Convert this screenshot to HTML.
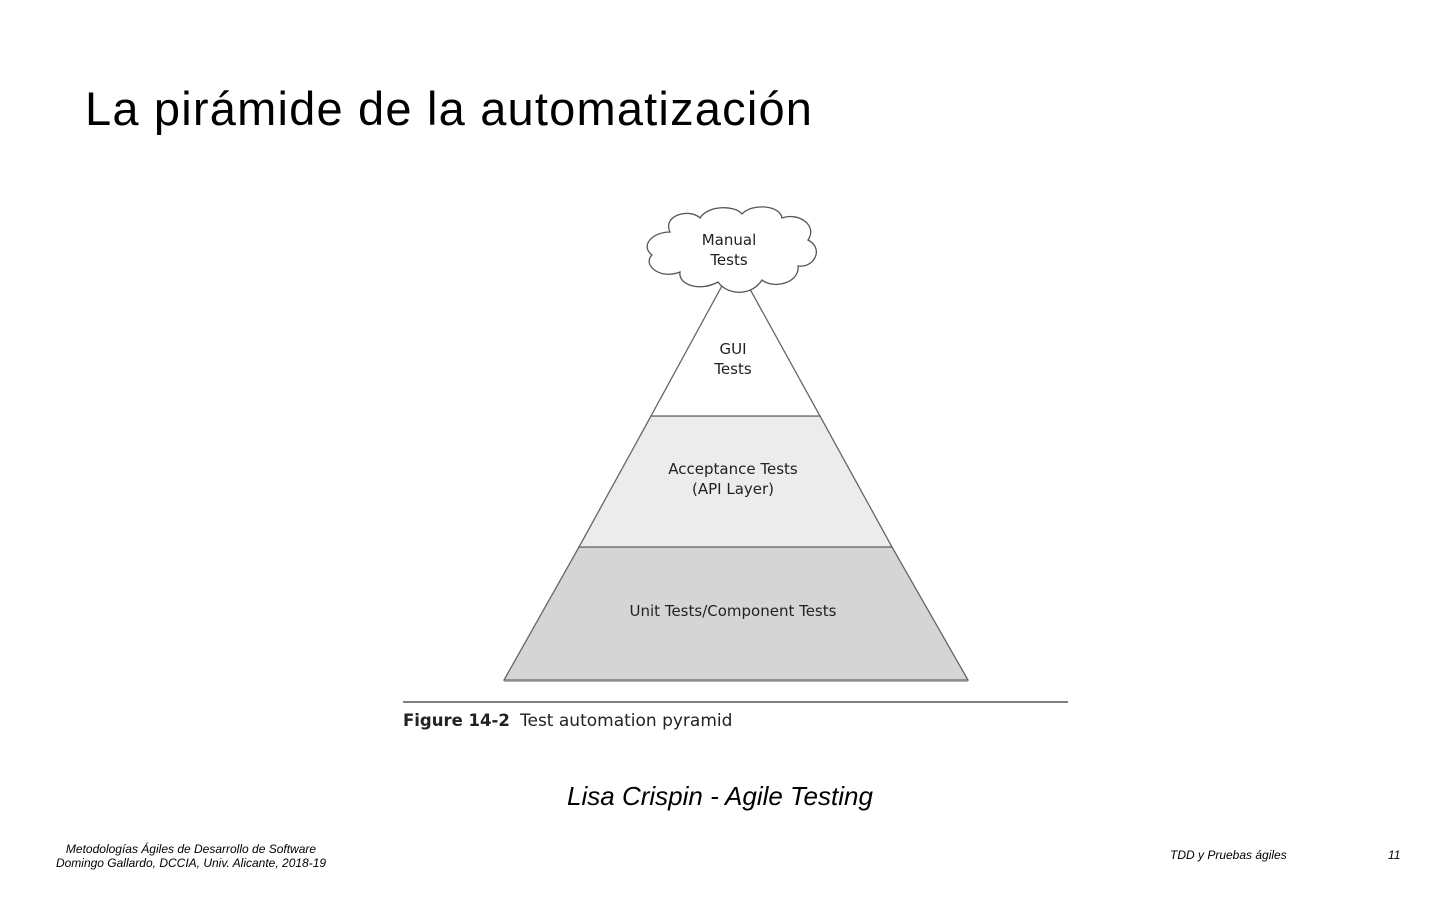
<!DOCTYPE html>
<html><head><meta charset="utf-8"><style>
html,body{margin:0;padding:0;background:#fff;width:1440px;height:900px;overflow:hidden;font-family:"Liberation Sans",sans-serif;}
.t{position:absolute;left:85px;top:81px;font-size:47px;letter-spacing:1.2px;color:#000;white-space:nowrap;}
.q{position:absolute;left:0;width:1440px;top:781px;text-align:center;font-size:26px;font-style:italic;color:#000;}
.f{position:absolute;font-size:12px;font-style:italic;color:#000;white-space:nowrap;line-height:14px;}
</style></head><body>
<div class="t">La pirámide de la automatización</div>
<svg width="1440" height="900" style="position:absolute;left:0;top:0">
<g font-family="'DejaVu Sans','Liberation Sans',sans-serif" font-size="15" fill="#222" text-anchor="middle">
<polygon points="504,680 968,680 892,547 579,547" fill="#d5d5d5" stroke="#666" stroke-width="1.3"/>
<polygon points="579,547 892,547 820,416 651,416" fill="#ececec" stroke="#666" stroke-width="1.3"/>
<polygon points="651,416 820,416 735,262" fill="#fff" stroke="#666" stroke-width="1.3"/>
<line x1="504" y1="681" x2="968" y2="681" stroke="#999" stroke-width="1.5"/>
<path d="M670,232 C662,215 690,208 700,218 C708,205 735,205 742,214 C752,203 780,205 782,218 C798,212 818,225 808,240 C824,248 815,268 798,266 C800,282 775,290 762,280 C752,296 728,296 718,282 C700,292 678,285 680,272 C660,280 642,265 652,255 C640,246 652,232 670,232 Z" fill="#fff" stroke="#555" stroke-width="1.3"/>
<text x="729" y="245">Manual</text><text x="729" y="265">Tests</text>
<text x="733" y="354">GUI</text><text x="733" y="374">Tests</text>
<text x="733" y="474">Acceptance Tests</text><text x="733" y="494">(API Layer)</text>
<text x="733" y="616">Unit Tests/Component Tests</text>
<line x1="403" y1="702" x2="1068" y2="702" stroke="#555" stroke-width="1.5"/>
<text x="403" y="726" text-anchor="start" font-weight="bold" font-size="16.5">Figure 14-2</text>
<text x="520" y="726" text-anchor="start" font-size="17">Test automation pyramid</text>
</g></svg>
<div class="q">Lisa Crispin - Agile Testing</div>
<div class="f" style="left:0;width:382px;text-align:center;top:842px;">Metodologías Ágiles de Desarrollo de Software<br>Domingo Gallardo, DCCIA, Univ. Alicante, 2018-19</div>
<div class="f" style="left:1170px;top:848px;">TDD y Pruebas ágiles</div>
<div class="f" style="left:1388px;top:848px;">11</div>
</body></html>
